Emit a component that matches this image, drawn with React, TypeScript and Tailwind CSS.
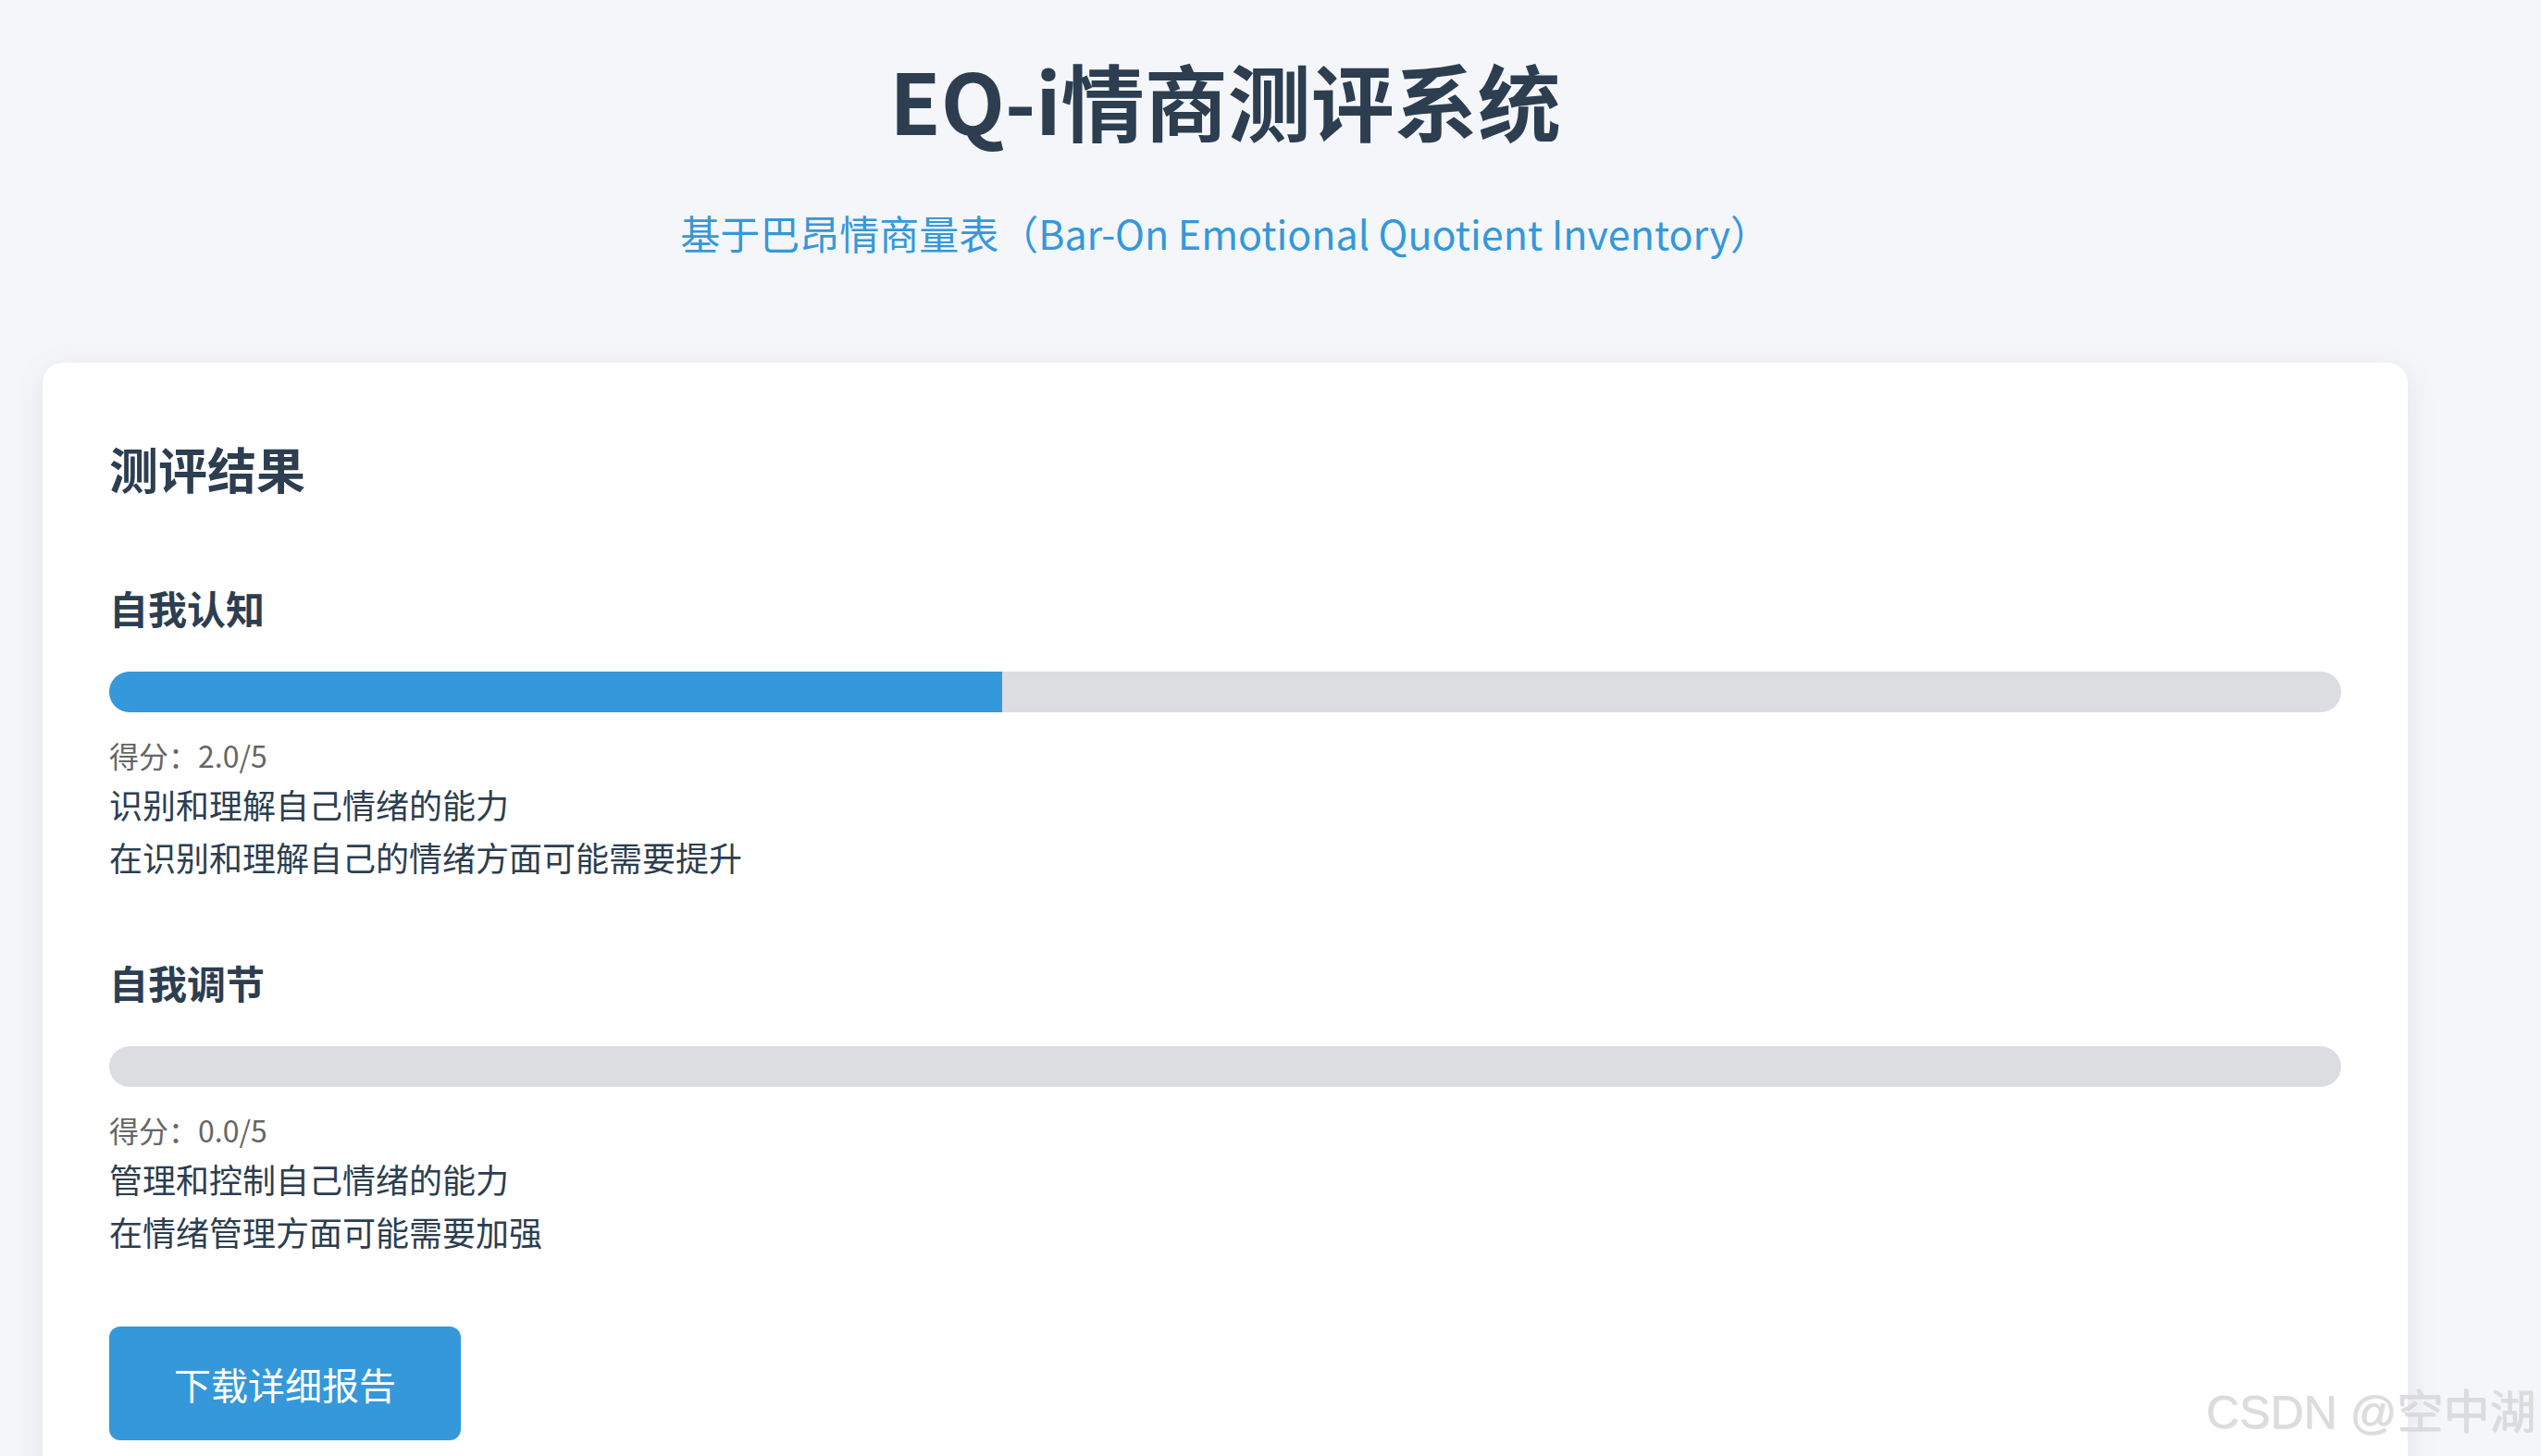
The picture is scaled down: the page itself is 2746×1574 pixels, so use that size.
const results = [
  {
    name: "自我认知",
    score: 2.0,
    desc: "识别和理解自己情绪的能力",
    advice: "在识别和理解自己的情绪方面可能需要提升",
  },
  {
    name: "自我调节",
    score: 0.0,
    desc: "管理和控制自己情绪的能力",
    advice: "在情绪管理方面可能需要加强",
  },
];

function ResultItem({ item, first }: { item: (typeof results)[number]; first: boolean }) {
  const pct = (item.score / 5) * 100;
  return (
    <div className={first ? "mt-[93px]" : "mt-[82px]"}>
      <h3 className="text-[42px] leading-[1.2] font-bold text-[#2c3e50]">{item.name}</h3>
      {/* Progress bar */}
      <div className="mt-[44px] h-[44px] w-full rounded-full bg-[#dcdde1] overflow-hidden">
        <div className="h-full bg-[#3498db]" style={{ width: `${pct}%` }}></div>
      </div>
      <p className="mt-[21px] text-[32px] leading-[50px] text-[#666666]">
        得分：{item.score.toFixed(1)}/5
      </p>
      <p className="text-[36px] leading-[57px] text-[#2c3e50]">{item.desc}</p>
      <p className="text-[36px] leading-[57px] text-[#2c3e50]">{item.advice}</p>
    </div>
  );
}

export default function App() {
  return (
    <div
      className="relative min-h-screen bg-[#f4f6f9] overflow-hidden"
      style={{ fontFamily: '"Noto Sans CJK SC", "Noto Sans", sans-serif' }}
    >
      <div className="ml-[46px] w-[2556px]">
        {/* Header */}
        <header className="text-center pt-[53px]">
          <h1 className="text-[90px] leading-[1.2] font-bold text-[#2c3e50]">EQ-i情商测评系统</h1>
          <p className="mt-[59px] text-[43px] leading-[63px] text-[#3498db]">
            基于巴昂情商量表（Bar-On Emotional Quotient Inventory）
          </p>
        </header>

        {/* Result card */}
        <section className="mt-[109px] bg-white rounded-[22px] shadow-[0_7px_35px_rgba(0,0,0,0.08)] px-[72px] pt-[83px] pb-[72px]">
          <h2 className="text-[53px] leading-[1.2] font-bold text-[#2c3e50]">测评结果</h2>
          {results.map((r, i) => (
            <ResultItem key={r.name} item={r} first={i === 0} />
          ))}
          <button className="mt-[74px] h-[123px] px-[70px] rounded-[12px] bg-[#3498db] text-white text-[40px]">
            下载详细报告
          </button>
        </section>
      </div>

      {/* watermark */}
      <div
        className="absolute right-[6px] top-[1502px] text-[50px] leading-none text-[#dcdcdc] [text-shadow:1px_1px_1px_rgba(0,0,0,0.12)]"
        style={{ fontFamily: '"Liberation Sans", "Noto Sans CJK SC", sans-serif' }}
      >
        CSDN @空中湖
      </div>
    </div>
  );
}
